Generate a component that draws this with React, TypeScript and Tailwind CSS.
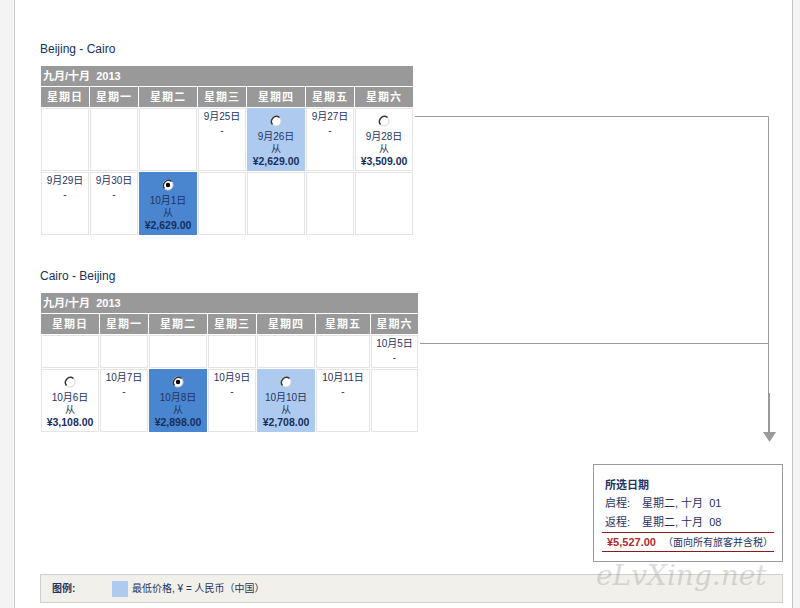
import React from "react";

type Cell = {
  date?: string;
  price?: string;
  tone?: "low" | "sel";
  checked?: boolean;
};

const CJK = { fontFamily: '"Liberation Sans", "Noto Sans CJK SC", sans-serif' };

const days = ["星期日", "星期一", "星期二", "星期三", "星期四", "星期五", "星期六"];

const outbound: Cell[][] = [
  [{}, {}, {}, { date: "9月25日" }, { date: "9月26日", price: "¥2,629.00", tone: "low" }, { date: "9月27日" }, { date: "9月28日", price: "¥3,509.00" }],
  [{ date: "9月29日" }, { date: "9月30日" }, { date: "10月1日", price: "¥2,629.00", tone: "sel", checked: true }, {}, {}, {}, {}],
];

const inbound: Cell[][] = [
  [{}, {}, {}, {}, {}, {}, { date: "10月5日" }],
  [
    { date: "10月6日", price: "¥3,108.00" },
    { date: "10月7日" },
    { date: "10月8日", price: "¥2,898.00", tone: "sel", checked: true },
    { date: "10月9日" },
    { date: "10月10日", price: "¥2,708.00", tone: "low" },
    { date: "10月11日" },
    {},
  ],
];

const Radio = ({ checked }: { checked?: boolean }) => (
  <svg width="12" height="12" viewBox="0 0 12 12" className="mx-auto block">
    <circle cx="6" cy="6" r="5" fill="#fff" stroke="#d4d4d4" strokeWidth="1" />
    <path d="M9.5 2.5 A5 5 0 0 0 2.5 9.5" fill="none" stroke="#333" strokeWidth="1.4" />
    {checked && <circle cx="6" cy="6" r="2.2" fill="#000" />}
  </svg>
);

const DayCell = ({ cell, height }: { cell: Cell; height: number }) => {
  const bg =
    cell.tone === "sel"
      ? "bg-[#4a86cf] border-[#4a86cf]"
      : cell.tone === "low"
      ? "bg-[#aecbef] border-[#aecbef]"
      : "bg-white border-[#e4e4e4]";
  return (
    <td
      className={`border ${bg} align-top text-center pt-[2px] text-[10px] leading-[12px] text-[#1f3463]`}
      style={{ height }}
    >
      {cell.price ? (
        <>
          <div className="h-[20px] pt-[4px]">
            <Radio checked={cell.checked} />
          </div>
          <div>{cell.date}</div>
          <div>从</div>
          <div className="font-bold text-[10.5px] text-[#162f5e]">{cell.price}</div>
        </>
      ) : cell.date ? (
        <>
          <div>{cell.date}</div>
          <div className="mt-[2px]">-</div>
        </>
      ) : null}
    </td>
  );
};

const Calendar = ({
  title,
  widths,
  rows,
  heights,
}: {
  title: string;
  widths: number[];
  rows: Cell[][];
  heights: number[];
}) => (
  <div>
    <h3 className="text-[12px] leading-[14px] text-[#17325c] mb-[9px]" style={{ fontFamily: '"Liberation Sans", sans-serif' }}>
      {title}
    </h3>
    <table className="border-separate border-spacing-[1px] table-fixed" style={CJK}>
      <colgroup>
        {widths.map((w, i) => (
          <col key={i} style={{ width: w }} />
        ))}
      </colgroup>
      <thead>
        <tr>
          <th colSpan={7} className="bg-[#999999] h-[20px] text-left pl-[2px] text-white text-[11px] font-bold">
            九月/十月&nbsp;&nbsp;2013
          </th>
        </tr>
        <tr>
          {days.map((d) => (
            <th key={d} className="bg-[#999999] h-[20px] text-center text-white text-[11px] font-bold tracking-[1px]">
              {d}
            </th>
          ))}
        </tr>
      </thead>
      <tbody>
        {rows.map((row, r) => (
          <tr key={r}>
            {row.map((cell, c) => (
              <DayCell key={c} cell={cell} height={heights[r]} />
            ))}
          </tr>
        ))}
      </tbody>
    </table>
  </div>
);

export default function App() {
  return (
    <div className="relative w-[800px] h-[608px] flex bg-white overflow-hidden" style={CJK}>
      <div className="w-[15px] shrink-0 bg-[#f4f4f4] border-r border-[#cccccc]" />

      <div className="flex-1 flex flex-col pl-[25px] pr-[9px] pt-[42px]">
        <Calendar title="Beijing - Cairo" widths={[48, 48, 58, 48, 58, 48, 58]} rows={outbound} heights={[63, 63]} />
        <div className="h-[33px]" />
        <Calendar title="Cairo - Beijing" widths={[58, 48, 58, 48, 58, 54, 47]} rows={inbound} heights={[33, 63]} />

        <div className="flex justify-end mt-[31px]">
          <div className="w-[190px] h-[98px] border border-[#9a9a9a] px-[8px] pt-[13px] text-[11px] text-[#1f3463]">
            <div className="font-bold leading-[14px] pl-[3px]">所选日期</div>
            <div className="flex leading-[14px] mt-[4px] pl-[3px]">
              <span className="w-[37px]">启程:</span>
              <span>星期二, 十月&nbsp;&nbsp;01</span>
            </div>
            <div className="flex leading-[14px] mt-[5px] pl-[3px]">
              <span className="w-[37px]">返程:</span>
              <span>星期二, 十月&nbsp;&nbsp;08</span>
            </div>
            <div className="mt-[3px] border-t border-b border-[#8b1a1a] h-[20px] flex items-center pl-[5px] text-[10px]">
              <span className="font-bold text-[11px] text-[#b3282d]">¥5,527.00</span>
              <span className="ml-[7px]">（面向所有旅客并含税）</span>
            </div>
          </div>
        </div>

        <div className="mt-[12px] h-[29px] bg-[#f2f0ea] border border-[#cfcfcf] flex items-center pl-[11px] text-[10px] text-[#1f3463]">
          <span className="font-bold w-[60px]">图例:</span>
          <span className="w-[16px] h-[16px] bg-[#aecbef] mr-[4px]" />
          <span>最低价格, ¥ = 人民币（中国）</span>
        </div>
      </div>

      <div className="w-[8px] shrink-0 bg-[#f4f4f4] border-l border-[#c4c4c4]" />

      <svg className="absolute left-0 top-0 pointer-events-none" width="800" height="608">
        <path d="M415 116.5 H768.5 V400" fill="none" stroke="#9a9a9a" strokeWidth="1" />
        <path d="M420 343.5 H768.5" fill="none" stroke="#9a9a9a" strokeWidth="1" />
        <rect x="768" y="393" width="2" height="40" fill="#9a9a9a" />
        <polygon points="763,432 776,432 769.5,442" fill="#9a9a9a" />
      </svg>

      <div
        className="absolute left-[596px] top-[558px] text-[28px] leading-[36px] italic text-[#a0a0a0]/40 pointer-events-none"
        style={{ fontFamily: '"DejaVu Serif", serif' }}
      >
        eLvXing.net
      </div>
    </div>
  );
}
